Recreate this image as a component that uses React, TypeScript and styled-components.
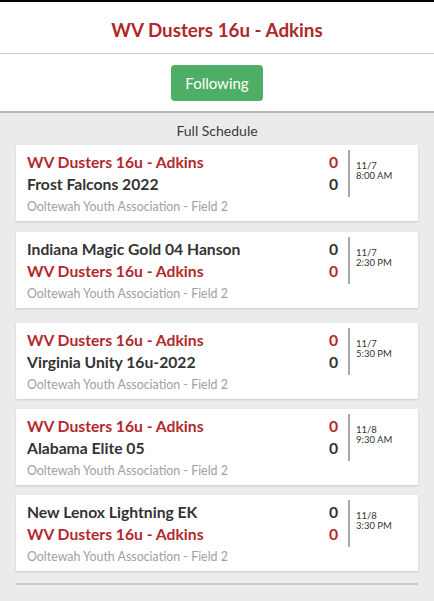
import styled, { createGlobalStyle } from "styled-components";
import { Fragment } from "react";

const GlobalStyle = createGlobalStyle`
  html, body {
    margin: 0;
    padding: 0;
    background-color: #ebebeb;
    font-family: Lato, "Open Sans", "Liberation Sans", sans-serif;
  }
  * {
    box-sizing: border-box;
  }
`;

const Page = styled.div`
  width: 434px;
  min-height: 601px;
  border-top: 2px solid #000;
  background-color: #ebebeb;
`;

const Header = styled.header`
  height: 52px;
  padding-top: 3px;
  background-color: #fff;
  border-bottom: 1px solid #cccccc;
  display: flex;
  align-items: center;
  justify-content: center;
`;

const Title = styled.h1`
  margin: 0;
  font-size: 18.8px;
  font-weight: 700;
  color: #b0282c;
`;

const FollowBar = styled.div`
  background-color: #fff;
  padding: 11px 0 10px 0;
  border-bottom: 2px solid #b8b8b8;
  display: flex;
  justify-content: center;
`;

const FollowButton = styled.button`
  height: 36px;
  padding: 0 14px;
  border: none;
  border-radius: 4px;
  background-color: #4fae65;
  color: #fff;
  font-family: inherit;
  font-size: 15px;
  font-weight: 400;
`;

const SectionTitle = styled.div`
  padding: 8px 0 4px 0;
  line-height: 20px;
  text-align: center;
  font-size: 14px;
  color: #3a3a3a;
`;

const GameCard = styled.div<{ $gap: number }>`
  height: 76px;
  margin: ${({ $gap }) => $gap}px 16px 0 16px;
  padding-left: 11px;
  display: flex;
  background-color: #fff;
  box-shadow: 0 1px 2px rgba(0, 0, 0, 0.14);
`;

const Main = styled.div`
  flex-grow: 1;
  padding-top: 6px;
`;

const TeamRow = styled.div<{ $mine: boolean }>`
  display: flex;
  justify-content: space-between;
  line-height: 22px;
  font-size: 15.7px;
  font-weight: 700;
  color: ${({ $mine }) => ($mine ? "#b3292c" : "#333")};
`;

const Venue = styled.div`
  margin-top: 2px;
  line-height: 20px;
  font-size: 12.4px;
  color: #a0a0a0;
`;

const Side = styled.div`
  width: 70px;
  height: 47px;
  margin: 5px 0 0 10px;
  padding: 11px 0 0 6px;
  border-left: 2px solid #a8a8a8;
  font-size: 9.5px;
  line-height: 9.5px;
  color: #333;
`;

const Footer = styled.div`
  margin: 12px 16px 0 16px;
  border-top: 2px solid #cacaca;
`;

type Game = {
  home: string;
  away: string;
  date: string;
  time: string;
  gap: number;
};

const MINE = "WV Dusters 16u - Adkins";

const games: Game[] = [
  { home: MINE, away: "Frost Falcons 2022", date: "11/7", time: "8:00 AM", gap: 0 },
  { home: "Indiana Magic Gold 04 Hanson", away: MINE, date: "11/7", time: "2:30 PM", gap: 11 },
  { home: MINE, away: "Virginia Unity 16u-2022", date: "11/7", time: "5:30 PM", gap: 15 },
  { home: MINE, away: "Alabama Elite 05", date: "11/8", time: "9:30 AM", gap: 10 },
  { home: "New Lenox Lightning EK", away: MINE, date: "11/8", time: "3:30 PM", gap: 10 },
];

export default function App() {
  const gameList = games.map((game, index) => (
    <Fragment key={index}>
      <GameCard $gap={game.gap}>
        <Main>
          {[game.home, game.away].map((team) => (
            <TeamRow key={team} $mine={team === MINE}>
              <span>{team}</span>
              <span>0</span>
            </TeamRow>
          ))}
          <Venue>Ooltewah Youth Association - Field 2</Venue>
        </Main>
        <Side>
          {game.date}
          <br />
          {game.time}
        </Side>
      </GameCard>
    </Fragment>
  ));

  return (
    <Page>
      <GlobalStyle />
      <Header>
        <Title>{MINE}</Title>
      </Header>
      <FollowBar>
        <FollowButton>Following</FollowButton>
      </FollowBar>
      <SectionTitle>Full Schedule</SectionTitle>
      {gameList}
      <Footer />
    </Page>
  );
}
